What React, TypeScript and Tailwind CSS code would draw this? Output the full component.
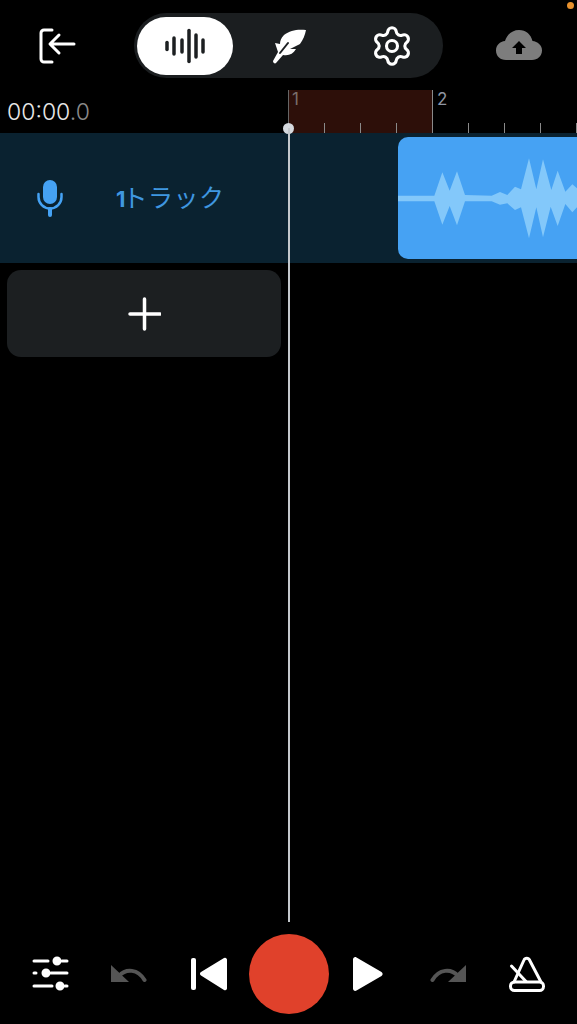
import { Settings } from "lucide-react";

const ticks = [0, 1, 2, 3, 4, 5, 6, 7];

function ExitIcon() {
  return (
    <svg width="38" height="36" viewBox="0 0 38 36" fill="none" stroke="#fff" strokeWidth="3" strokeLinecap="round" strokeLinejoin="round">
      <path d="M13 2H5a3 3 0 0 0-3 3v26a3 3 0 0 0 3 3h8" />
      <path d="M35 16H12M20 7l-9 9 9 9" />
    </svg>
  );
}

function BarsIcon() {
  const bars = [
    [3, 3.5],
    [10, 8],
    [18, 6],
    [25, 15.500],
    [32, 11],
    [39, 6],
  ];
  return (
    <svg width="42" height="36" viewBox="0 0 42 36" fill="none" stroke="#1c1f21" strokeWidth="3.500" strokeLinecap="round">
      {bars.map(([x, h]) => (
        <path key={x} d={`M${x} ${18 - h}V${18 + h}`} />
      ))}
    </svg>
  );
}

function FeatherIcon() {
  return (
    <svg width="50" height="50" viewBox="0 0 50 50">
      <path
        fill="#fff"
        d="M43 9C35 8 27 9 21 14C18 17 17 20 17 23L12 22L15 31L10 40C10 42 12 43 13 42L20 34C26 35 30 33 33 28L27 28L37 23C40 19 42 14 43 9Z"
      />
      <path d="M17 32L25 22" stroke="#1b1e20" strokeWidth="2" strokeLinecap="round" />
    </svg>
  );
}

function CloudIcon() {
  return (
    <svg width="46" height="30" viewBox="0 0 46 30">
      <path d="M10 30C4 30 0 26 0 20.500 0 15 4 11.500 9 11 11 4.500 16.500 0 23 0c7 0 12 4.500 13.500 11 5 .5 9.500 4 9.500 9.500S41.500 30 36 30Z" fill="#7d7d7d" />
      <path d="M23 11l7 7h-4v6h-6v-6h-4Z" fill="#000" />
    </svg>
  );
}

function MicIcon() {
  return (
    <svg width="26" height="38" viewBox="0 0 26 38" fill="none" stroke="#45a2f4" strokeWidth="2.500" strokeLinecap="round">
      <rect x="6" y="1" width="14" height="24" rx="7" fill="#45a2f4" stroke="none" />
      <path d="M1.500 15v3a11.500 11.500 0 0 0 23 0v-3" />
      <path d="M13 30v6" strokeWidth="4" />
    </svg>
  );
}

function Waveform() {
  return (
    <svg className="block h-[122px] w-[179px]" viewBox="24 21 537 366">
      <path
        fill="#83c8fa"
        d="M24 197H133L157 127L179 182L201 124L225 195L305 197L330 186L352 195L375 170L393 178L417 85L439 178L459 88L484 180L503 122L526 185L547 163L561 175V232L547 247L526 222L503 288L482 230L459 322L439 232L417 325L393 232L375 240L352 220L330 224L305 214H225L201 286L179 228L157 284L133 214H24Z"
      />
    </svg>
  );
}

function SlidersIcon() {
  return (
    <svg width="38" height="36" viewBox="0 0 38 36" fill="#fff" stroke="#fff" strokeWidth="3" strokeLinecap="round">
      <path d="M3 5h14M31 5h5M3 17h2M20 17h16M3 30h18M34 30h2" fill="none" />
      <circle cx="26" cy="5" r="3" />
      <circle cx="15" cy="17" r="3" />
      <circle cx="29" cy="30" r="3" />
    </svg>
  );
}

function UndoIcon({ flip }: { flip?: boolean }) {
  return (
    <svg className={flip ? "-scale-x-100" : ""} width="36" height="18" viewBox="0 0 36 18">
      <path d="M0 0V17H18Z" fill="#555" />
      <path d="M8 11C15 3 27 4 33.500 15" fill="none" stroke="#555" strokeWidth="4" strokeLinecap="round" />
    </svg>
  );
}

function PrevIcon() {
  return (
    <svg width="38" height="34" viewBox="0 0 38 34" fill="#fff">
      <rect x="1" y="1" width="5" height="32" rx="2" />
      <path d="M37 2.500a2 2 0 0 0-3-1.500L11 15a2 2 0 0 0 0 3.500L34 33a2 2 0 0 0 3-1.500Z" />
    </svg>
  );
}

function PlayIcon() {
  return (
    <svg width="30" height="34" viewBox="0 0 30 34" fill="#fff">
      <path d="M0 2.500C0 .5 2-.5 3.500.5l25 14.500c1.500 1 1.500 3 0 4L3.500 33.500C2 34.500 0 33.500 0 31.500Z" />
    </svg>
  );
}

function MetronomeIcon() {
  return (
    <svg width="38" height="38" viewBox="0 0 38 38" fill="none" stroke="#fff" strokeWidth="3" strokeLinecap="round" strokeLinejoin="round">
      <path d="M6 27 16 5C17 2.500 20.500 2.500 21.500 5L33 27" />
      <rect x="2.500" y="27" width="33" height="8.500" rx="4" />
      <path d="M3.500 11 18 26.500" />
    </svg>
  );
}

export default function App() {
  return (
    <div className="relative flex h-[1024px] w-[577px] flex-col overflow-hidden bg-black font-['Inter','Noto_Sans_CJK_JP',sans-serif]">
      <div className="absolute top-[2px] right-[3px] h-[7px] w-[7px] rounded-full bg-[#e8912d]" />

      <header className="flex h-[90px] shrink-0 items-start pt-[13px]">
        <div className="flex w-[134px] justify-center pt-[15px] pr-[18px]">
          <ExitIcon />
        </div>
        <div className="flex h-[65px] w-[309px] items-center rounded-full bg-[#1b1e20] pl-[3px]">
          <div className="flex h-[58px] w-[96px] items-center justify-center rounded-full bg-white">
            <BarsIcon />
          </div>
          <div className="flex w-[110px] justify-center">
            <FeatherIcon />
          </div>
          <div className="flex w-[98px] justify-center">
            <Settings size={44} color="#fff" strokeWidth={1.7} />
          </div>
        </div>
        <div className="flex flex-1 justify-center pt-[17px] pl-[18px]">
          <CloudIcon />
        </div>
      </header>

      <div className="flex h-[43px] shrink-0">
        <div className="w-[288px] shrink-0 pt-[9px] pl-[7px] text-[23px] leading-[26px] font-light text-[#e8e8e8]">
          00:00<span className="text-[#8a8a8a]">.0</span>
        </div>
        <div className="relative flex-1 border-l border-[#666]">
          <div className="absolute inset-y-0 left-0 w-[144px] bg-[#2d0f09]" />
          <span className="absolute top-0 left-[3px] text-[17px] leading-[18px] text-[#7a6f6c]">1</span>
          <span className="absolute top-0 left-[148px] text-[17px] leading-[18px] text-[#8f95a3]">2</span>
          <div className="absolute inset-x-0 bottom-0 flex">
            {ticks.map((t) => (
              <div key={t} className={`w-[36px] shrink-0 border-r border-[#8a8a8a] ${t === 3 ? "h-[43px]" : "h-[10px]"} self-end`} />
            ))}
          </div>
        </div>
      </div>

      <div className="flex h-[130px] shrink-0 items-center bg-[#0a2230]">
        <div className="flex w-[100px] justify-center">
          <MicIcon />
        </div>
        <div className="w-[298px] pl-[16px] text-[25px] leading-none tracking-[0.5px] text-[#3f97e0]">
          <span className="text-[22px] font-bold tracking-[-3px]">1</span>トラック
        </div>
        <div className="h-[122px] flex-1 rounded-l-[10px] bg-[#46a2f3]">
          <Waveform />
        </div>
      </div>

      <div className="px-[7px] pt-[7px]">
        <div className="flex h-[87px] w-[274px] items-center justify-center rounded-[14px] bg-[#1c1f21]">
          <svg width="34" height="34" viewBox="0 0 34 34" stroke="#fff" strokeWidth="3.500" strokeLinecap="round">
            <path d="M17.500 2v30M3 17h30" />
          </svg>
        </div>
      </div>

      <div className="flex-1" />

      <footer className="grid h-[102px] shrink-0 grid-cols-7 items-center justify-items-center px-[10px] pt-[2px]">
        <SlidersIcon />
        <UndoIcon />
        <PrevIcon />
        <div className="h-[80px] w-[80px] rounded-full bg-[#e0412b]" />
        <PlayIcon />
        <UndoIcon flip />
        <MetronomeIcon />
      </footer>

      {/* playhead sits over the ruler and tracks */}
      <div className="absolute top-[123px] left-[283px] h-[11px] w-[11px] rounded-full bg-[#d5d9de]" />
      <div className="absolute top-[128px] left-[288px] h-[794px] w-[2px] bg-[#c4c8cc]" />
    </div>
  );
}
